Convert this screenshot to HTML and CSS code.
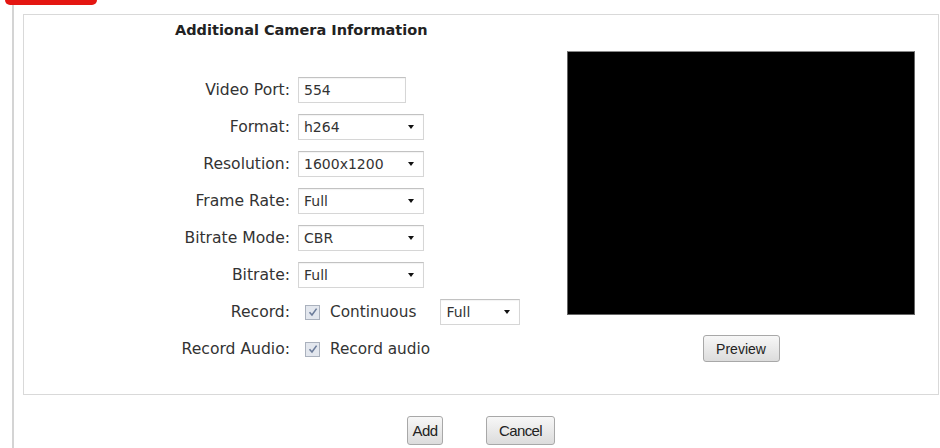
FILE: index.html
```html
<!DOCTYPE html>
<html>
<head>
  <meta charset="utf-8">
  <title>Add Camera</title>
  <link rel="stylesheet" href="styles.css">
</head>
<body>
  <div class="tab"></div>
  <div class="frame">
    <div class="panel">
      <!-- Camera settings -->
      <div class="form-col">
        <h3 class="title">Additional Camera Information</h3>
        <div class="form-grid">
          <label>Video Port:</label>
          <div class="field"><span class="text-input">554</span></div>

          <label>Format:</label>
          <div class="field"><span class="select">h264</span></div>

          <label>Resolution:</label>
          <div class="field"><span class="select">1600x1200</span></div>

          <label>Frame Rate:</label>
          <div class="field"><span class="select">Full</span></div>

          <label>Bitrate Mode:</label>
          <div class="field"><span class="select">CBR</span></div>

          <label>Bitrate:</label>
          <div class="field"><span class="select">Full</span></div>

          <label>Record:</label>
          <div class="field">
            <span class="check">
              <svg width="10" height="10" viewBox="0 0 10 10"><path d="M1.5 5.2 L4 8 L8.6 1.6" fill="none" stroke="#6c7c9a" stroke-width="1.6"/></svg>
            </span>
            <span class="check-label">Continuous</span>
            <span class="select select-small">Full</span>
          </div>

          <label>Record Audio:</label>
          <div class="field">
            <span class="check">
              <svg width="10" height="10" viewBox="0 0 10 10"><path d="M1.5 5.2 L4 8 L8.6 1.6" fill="none" stroke="#6c7c9a" stroke-width="1.6"/></svg>
            </span>
            <span class="check-label">Record audio</span>
          </div>
        </div>
      </div>

      <!-- Live preview -->
      <div class="preview-col">
        <div class="video"></div>
        <button class="btn btn-preview">Preview</button>
      </div>
    </div>

    <div class="actions">
      <button class="btn btn-add">Add</button>
      <button class="btn btn-cancel">Cancel</button>
    </div>
  </div>
</body>
</html>
```

FILE: styles.css
```css
body {
  margin: 0;
  background: #fff;
  color: #333;
  font-family: "DejaVu Sans", Verdana, sans-serif;
  height: 448px;
  overflow: hidden;
}

.tab {
  margin-left: 5px;
  width: 92px;
  height: 5px;
  background: #e41612;
  border-radius: 0 0 6px 6px;
}

.frame {
  margin-left: 12px;
  border-left: 2px solid #d4d4d4;
  padding: 9px 0 3px 9px;
}

.panel {
  width: 916px;
  box-sizing: border-box;
  border: 1px solid #d9d9d9;
  display: flex;
  padding-bottom: 32px;
}

.form-col {
  width: 543px;
  flex: none;
  padding-top: 6px;
}

.title {
  margin: 0 0 0 151px;
  font-size: 14.5px;
  line-height: 18px;
  font-weight: bold;
  color: #222;
}

.form-grid {
  margin-top: 38px;
  display: grid;
  grid-template-columns: 266px auto;
  grid-auto-rows: 26px;
  column-gap: 8px;
  row-gap: 11px;
}

.form-grid label {
  text-align: right;
  font-size: 15.6px;
  line-height: 26px;
  color: #333;
}

.field {
  display: flex;
  align-items: center;
}

.text-input,
.select {
  box-sizing: border-box;
  height: 26px;
  line-height: 24px;
  padding-left: 5px;
  border: 1px solid #d6d6d6;
  border-top-color: #c2c2c2;
  font-size: 14px;
  color: #333;
  background: #fff;
  box-shadow: inset 0 1px 1px rgba(0,0,0,0.05);
}

.text-input {
  width: 108px;
}

.select {
  position: relative;
  width: 126px;
}

.select::after {
  content: "";
  position: absolute;
  right: 9px;
  top: 10px;
  border-left: 3.5px solid transparent;
  border-right: 3.5px solid transparent;
  border-top: 4px solid #111;
}

.select-small {
  width: 80px;
  margin-left: 24px;
}

.check {
  box-sizing: border-box;
  width: 15px;
  height: 15px;
  margin-left: 7px;
  border: 1px solid #aab1bd;
  background: #e3e7ee;
  display: flex;
  align-items: center;
  justify-content: center;
}

.check-label {
  margin-left: 10px;
  font-size: 15.3px;
  color: #333;
}

.preview-col {
  width: 348px;
  padding-top: 36px;
  display: flex;
  flex-direction: column;
  align-items: center;
}

.video {
  width: 348px;
  height: 264px;
  box-sizing: border-box;
  background: #000;
  border: 1px solid #666;
  border-top-color: #888;
}

.btn {
  font-family: "Liberation Sans", Arial, sans-serif;
  font-size: 14px;
  color: #222;
  background: linear-gradient(#f7f7f7, #dcdcdc);
  border: 1px solid #a8a8a8;
  border-radius: 3px;
  padding: 0;
  height: 27px;
  cursor: pointer;
}

.btn-preview {
  margin-top: 20px;
  width: 77px;
}

.actions {
  width: 916px;
  padding-top: 21px;
  display: flex;
  justify-content: center;
  gap: 43px;
}

.btn-add,
.btn-cancel {
  height: 29px;
  font-size: 15px;
  letter-spacing: -0.6px;
}

.btn-add {
  width: 36px;
}

.btn-cancel {
  width: 69px;
}
```
